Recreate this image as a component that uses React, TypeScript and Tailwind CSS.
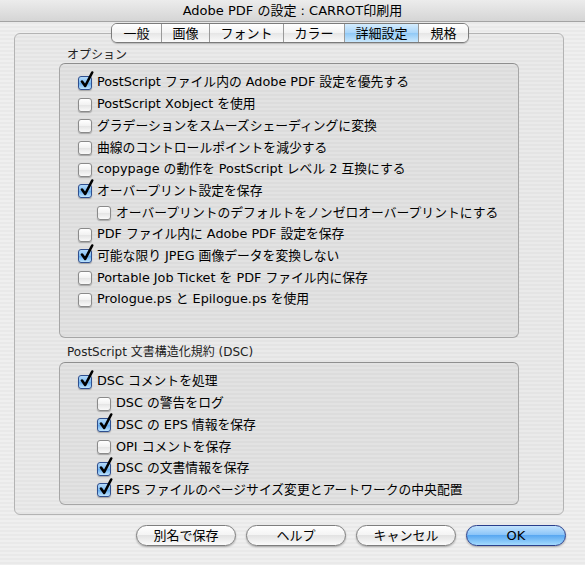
import React from 'react'

type Item = { label: string; checked: boolean; sub?: boolean }

const OPTIONS: Item[] = [
  { label: 'PostScript ファイル内の Adobe PDF 設定を優先する', checked: true },
  { label: 'PostScript Xobject を使用', checked: false },
  { label: 'グラデーションをスムーズシェーディングに変換', checked: false },
  { label: '曲線のコントロールポイントを減少する', checked: false },
  { label: 'copypage の動作を PostScript レベル 2 互換にする', checked: false },
  { label: 'オーバープリント設定を保存', checked: true },
  { label: 'オーバープリントのデフォルトをノンゼロオーバープリントにする', checked: false, sub: true },
  { label: 'PDF ファイル内に Adobe PDF 設定を保存', checked: false },
  { label: '可能な限り JPEG 画像データを変換しない', checked: true },
  { label: 'Portable Job Ticket を PDF ファイル内に保存', checked: false },
  { label: 'Prologue.ps と Epilogue.ps を使用', checked: false },
]

const DSC: Item[] = [
  { label: 'DSC コメントを処理', checked: true },
  { label: 'DSC の警告をログ', checked: false, sub: true },
  { label: 'DSC の EPS 情報を保存', checked: true, sub: true },
  { label: 'OPI コメントを保存', checked: false, sub: true },
  { label: 'DSC の文書情報を保存', checked: true, sub: true },
  { label: 'EPS ファイルのページサイズ変更とアートワークの中央配置', checked: true, sub: true },
]

const TABS = [
  { label: '一般', w: 'w-[49px]' },
  { label: '画像', w: 'w-[48px]' },
  { label: 'フォント', w: 'w-[74px]' },
  { label: 'カラー', w: 'w-[61px]' },
  { label: '詳細設定', w: 'w-[74px]', active: true },
  { label: '規格', w: 'w-[50px]' },
]

function Checkbox({ checked }: { checked: boolean }) {
  return (
    <span className="relative w-[14px] h-[14px] shrink-0">
      <span
        className={`block w-full h-full rounded-[3px] border shadow-[0_1px_1px_rgba(0,0,0,0.25)] ${
          checked
            ? 'border-[#2f4f8f] [background-image:linear-gradient(#b4dafa,#7dbbf2_50%,#62aaee_50%,#bfe4fd)]'
            : 'border-[#8a8a8a] [background-image:linear-gradient(#ffffff,#f1f1f1_50%,#e4e4e4_50%,#fafafa)]'
        }`}
      />
      {checked && (
        <svg className="absolute left-[1px] -top-[5px] w-[15px] h-[18px]" viewBox="0 0 15 18">
          <path
            d="M3 10.5 L6.2 15 L13.2 1.5"
            fill="none"
            stroke="#000"
            strokeWidth="2.6"
            strokeLinecap="round"
            strokeLinejoin="round"
          />
        </svg>
      )}
    </span>
  )
}

function Row({ item }: { item: Item }) {
  return (
    <div className={`flex items-center h-[21.7px] gap-[5px] ${item.sub ? 'pl-[37px]' : 'pl-[18px]'}`}>
      <Checkbox checked={item.checked} />
      <span className="text-[12.8px] leading-none text-black whitespace-nowrap">{item.label}</span>
    </div>
  )
}

function Pill({ label, primary }: { label: string; primary?: boolean }) {
  return (
    <button
      className={`w-[100px] h-[21px] rounded-full border text-[13px] leading-none text-black shadow-[0_1px_2px_rgba(0,0,0,0.3)] ${
        primary
          ? 'border-[#2a3f8c] [background-image:linear-gradient(#c3e3fd,#86c2f8_50%,#5aa8f1_50%,#a3dafd)]'
          : 'border-[#7e7e7e] [background-image:linear-gradient(#ffffff,#f3f3f3_50%,#e3e3e3_50%,#fbfbfb)]'
      }`}
    >
      {label}
    </button>
  )
}

export default function App() {
  return (
    <div className="w-[585px] h-[565px] overflow-hidden font-['DejaVu_Sans','Noto_Sans_CJK_JP',sans-serif] text-black [background-image:repeating-linear-gradient(180deg,#efefef_0px,#efefef_2px,#e9e9e9_2px,#e9e9e9_4px)]">
      {/* title bar */}
      <div className="h-[22px] flex items-center justify-center border-b border-[#a3a3a3] [background-image:linear-gradient(#ececec,#d5d5d5)]">
        <span className="text-[13px] leading-none">Adobe PDF の設定 : CARROT印刷用</span>
      </div>

      {/* tab strip */}
      <div className="relative z-10 mt-[1px] ml-[111px] flex h-[20px] w-fit rounded-[6px] border border-[#7b7b7b] overflow-hidden shadow-[0_1px_1px_rgba(0,0,0,0.2)]">
        {TABS.map((t, i) => (
          <div
            key={t.label}
            className={`${t.w} flex items-center justify-center text-[13px] leading-none ${
              i > 0 ? 'border-l border-[#9a9a9a]' : ''
            } ${
              t.active
                ? '[background-image:linear-gradient(#d4ecfd,#a9d5f9_50%,#8fc8f6_50%,#c9e8fd)]'
                : '[background-image:linear-gradient(#ffffff,#f3f3f3_50%,#e5e5e5_50%,#fafafa)]'
            }`}
          >
            {t.label}
          </div>
        ))}
      </div>

      {/* tab panel */}
      <div className="-mt-[10px] ml-[14px] w-[550px] h-[482px] rounded-[6px] border border-[#b3b3b3] px-[44px] [background-image:repeating-linear-gradient(180deg,#eaeaea_0px,#eaeaea_2px,#e4e4e4_2px,#e4e4e4_4px)]">
        <div className="h-[29px] pt-[13px] pl-[8px] text-[12px] leading-[16px] text-[#222]">オプション</div>
        <div className="h-[275px] rounded-[6px] border border-[#a6a6a6] border-t-[#8e8e8e] pt-[8px] [background-image:repeating-linear-gradient(180deg,#e2e2e2_0px,#e2e2e2_2px,#dcdcdc_2px,#dcdcdc_4px)]">
          {OPTIONS.map((o) => (
            <Row key={o.label} item={o} />
          ))}
        </div>

        <div className="h-[24px] pt-[6px] pl-[8px] text-[12px] leading-[16px] text-[#222]">
          PostScript 文書構造化規約 (DSC)
        </div>
        <div className="h-[143px] rounded-[6px] border border-[#a6a6a6] border-t-[#8e8e8e] pt-[8px] [background-image:repeating-linear-gradient(180deg,#e2e2e2_0px,#e2e2e2_2px,#dcdcdc_2px,#dcdcdc_4px)]">
          {DSC.map((o) => (
            <Row key={o.label} item={o} />
          ))}
        </div>
      </div>

      {/* buttons */}
      <div className="mt-[10px] pr-[19px] flex justify-end gap-[10px]">
        <Pill label="別名で保存" />
        <Pill label="ヘルプ" />
        <Pill label="キャンセル" />
        <Pill label="OK" primary />
      </div>
    </div>
  )
}
